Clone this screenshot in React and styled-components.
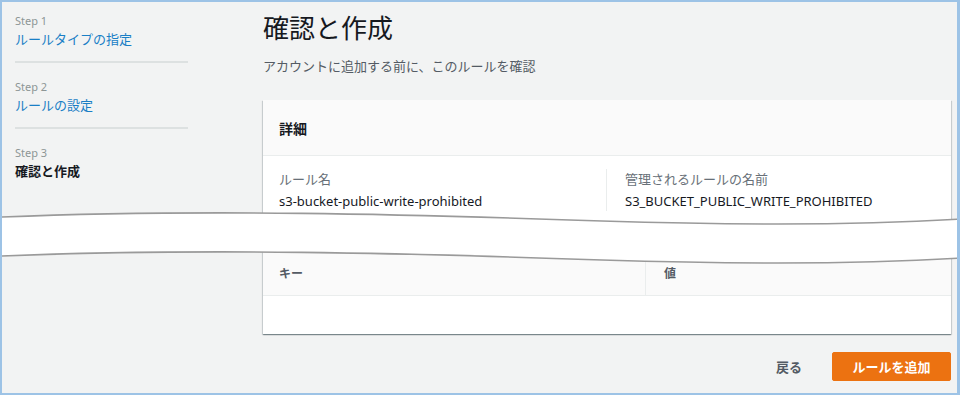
import React from "react";
import styled, { createGlobalStyle } from "styled-components";

const Global = createGlobalStyle`
  html, body { margin: 0; padding: 0; background: #fff; }
  body { font-family: "Noto Sans", "Noto Sans CJK JP", sans-serif; }
  * { box-sizing: border-box; }
`;

const Frame = styled.div`
  position: relative;
  width: 960px;
  height: 395px;
  border: 2px solid #9dc3e6;
  border-right-width: 3px;
  background: #f2f3f3;
  display: grid;
  grid-template-columns: 248px 1fr;
  overflow: hidden;
`;

const Sidebar = styled.nav`
  padding: 12px 0 0 13px;
`;

const StepList = styled.ol`
  list-style: none;
  margin: 0;
  padding: 0;
  width: 173px;
`;

const StepItem = styled.li`
  padding: ${(p) => (p.$first ? "0" : "17px")} 0 13px;
  border-bottom: ${(p) => (p.$last ? "none" : "2px solid #dde1e1")};
`;

const StepLabel = styled.div`
  font-size: 11px;
  line-height: 14px;
  color: #8d9696;
`;

const StepTitle = styled.div`
  margin-top: 2px;
  font-size: 13px;
  line-height: 18px;
  color: ${(p) => (p.$active ? "#16191f" : "#1a7fc6")};
  font-weight: ${(p) => (p.$active ? 700 : 400)};
`;

const Main = styled.main`
  padding: 10px 7px 0 13px;
  display: flex;
  flex-direction: column;
`;

const Heading = styled.h1`
  margin: 0;
  font-size: 26px;
  line-height: 32px;
  font-weight: 400;
  color: #16191f;
`;

const Subtitle = styled.p`
  margin: 12px 0 0;
  font-size: 13px;
  line-height: 20px;
  color: #545b64;
`;

const Panel = styled.section`
  margin-top: 24px;
  width: 688px;
  background: #fff;
  box-shadow: 0 1px 1px 0 rgba(0, 28, 36, 0.35), 1px 1px 1px 0 rgba(0, 28, 36, 0.12),
    -1px 1px 1px 0 rgba(0, 28, 36, 0.12);
`;

const PanelHeader = styled.header`
  height: 56px;
  display: flex;
  align-items: center;
  padding: 0 16px;
  background: #fafafa;
  border-bottom: 1px solid #eaeded;
  font-size: 14px;
  font-weight: 700;
  color: #16191f;
`;

const Columns = styled.div`
  display: grid;
  grid-template-columns: 343px 1fr;
  padding: 13px 0 0;
  height: 94px;
`;

const Column = styled.div`
  padding: 0 16px 0 ${(p) => (p.$second ? "18px" : "16px")};
  border-left: ${(p) => (p.$second ? "1px solid #eaeded" : "none")};
  height: 42px;
`;

const FieldLabel = styled.div`
  font-size: 13px;
  line-height: 20px;
  color: #687078;
`;

const FieldValue = styled.div`
  margin-top: 3px;
  font-size: 13px;
  line-height: 18px;
  color: #16191f;
`;

const Table = styled.div`
  display: grid;
  grid-template-columns: 382px 1fr;
`;

const HeadCell = styled.div`
  height: 46px;
  display: flex;
  align-items: center;
  padding: 0 16px 0 ${(p) => (p.$second ? "18px" : "16px")};
  background: #fafafa;
  border-bottom: 1px solid #eaeded;
  border-left: ${(p) => (p.$second ? "1px solid #eaeded" : "none")};
  font-size: 12px;
  font-weight: 700;
  color: #545b64;
`;

const EmptyRow = styled.div`
  grid-column: 1 / -1;
  height: 38px;
`;

const Actions = styled.div`
  margin-top: 18px;
  width: 688px;
  display: flex;
  justify-content: flex-end;
  align-items: center;
  gap: 30px;
`;

const LinkButton = styled.button`
  border: 0;
  background: none;
  padding: 0;
  font-family: inherit;
  font-size: 13px;
  font-weight: 700;
  color: #545b64;
`;

const PrimaryButton = styled.button`
  width: 119px;
  height: 29px;
  border: 1px solid #ec7211;
  border-radius: 2px;
  background: #ec7211;
  color: #fff;
  font-family: inherit;
  font-size: 13px;
  font-weight: 700;
`;

const Break = styled.svg`
  position: absolute;
  left: 0;
  top: 0;
  width: 100%;
  height: 100%;
  pointer-events: none;
`;

const topCurve = "M0,215 C200,207 400,212 600,219 C760,224 880,222 960,217";
const botCurve = "M960,256 C880,261 760,263 600,258 C400,251 200,246 0,254";
const band =
  "M0,215 C200,207 400,212 600,219 C760,224 880,222 960,217 L960,256 C880,261 760,263 600,258 C400,251 200,246 0,254 Z";

export default function App() {
  return (
    <>
      <Global />
      <Frame>
        <Sidebar>
          <StepList>
            <StepItem $first>
              <StepLabel>Step 1</StepLabel>
              <StepTitle>ルールタイプの指定</StepTitle>
            </StepItem>
            <StepItem>
              <StepLabel>Step 2</StepLabel>
              <StepTitle>ルールの設定</StepTitle>
            </StepItem>
            <StepItem $last>
              <StepLabel>Step 3</StepLabel>
              <StepTitle $active>確認と作成</StepTitle>
            </StepItem>
          </StepList>
        </Sidebar>
        <Main>
          <Heading>確認と作成</Heading>
          <Subtitle>アカウントに追加する前に、このルールを確認</Subtitle>
          <Panel>
            <PanelHeader>詳細</PanelHeader>
            <Columns>
              <Column>
                <FieldLabel>ルール名</FieldLabel>
                <FieldValue>s3-bucket-public-write-prohibited</FieldValue>
              </Column>
              <Column $second>
                <FieldLabel>管理されるルールの名前</FieldLabel>
                <FieldValue>S3_BUCKET_PUBLIC_WRITE_PROHIBITED</FieldValue>
              </Column>
            </Columns>
            <Table>
              <HeadCell>キー</HeadCell>
              <HeadCell $second>値</HeadCell>
              <EmptyRow />
            </Table>
          </Panel>
          <Actions>
            <LinkButton>戻る</LinkButton>
            <PrimaryButton>ルールを追加</PrimaryButton>
          </Actions>
        </Main>
        <Break viewBox="0 0 955 391" preserveAspectRatio="none">
          <path d={band} fill="#fff" />
          <path d={topCurve} fill="none" stroke="#9a9a9a" strokeWidth="1.6" />
          <path d={botCurve} fill="none" stroke="#9a9a9a" strokeWidth="1.6" />
        </Break>
      </Frame>
    </>
  );
}
